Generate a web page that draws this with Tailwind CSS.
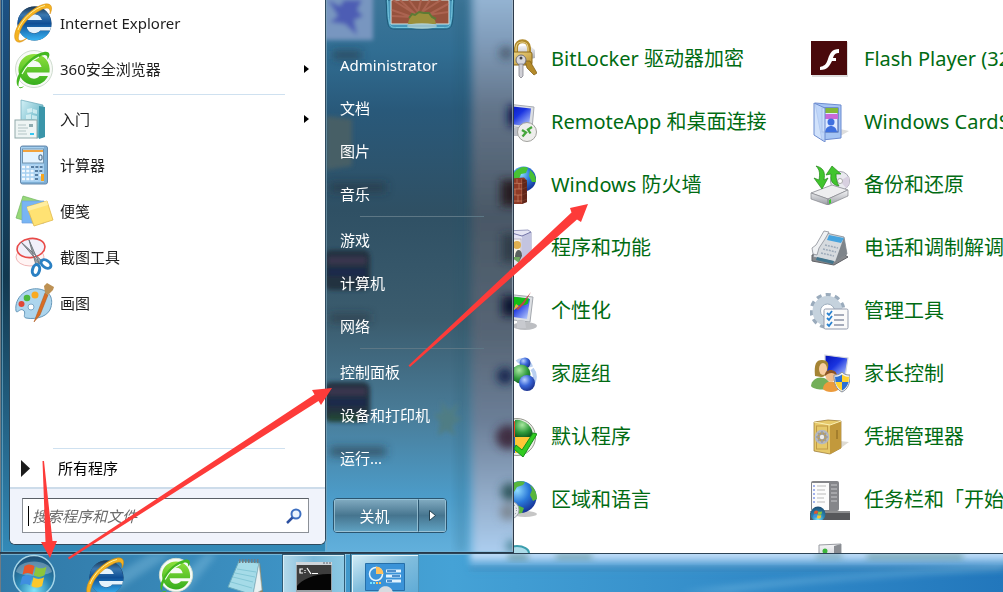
<!DOCTYPE html>
<html lang="zh-CN">
<head>
<meta charset="utf-8">
<title>开始菜单</title>
<script src="https://cdn.jsdelivr.net/npm/@tailwindcss/browser@4"></script>
</head>
<body class="h-screen overflow-hidden bg-white font-['Noto_Sans','Noto_Sans_CJK_SC',sans-serif]">
<svg class="absolute size-0" aria-hidden="true">
  <defs>
    <linearGradient id="ieb" x1="0" y1="0" x2="0" y2="1"><stop offset="0" stop-color="#1b3550"/><stop offset=".25" stop-color="#3a78b0"/><stop offset=".5" stop-color="#0f4f96"/><stop offset="1" stop-color="#38b4f4"/></linearGradient>
    <linearGradient id="grn" x1="0" y1="0" x2="0" y2="1"><stop offset="0" stop-color="#8fe03c"/><stop offset="1" stop-color="#35ae1d"/></linearGradient>
    <linearGradient id="gold" x1="0" y1="0" x2="1" y2="1"><stop offset="0" stop-color="#f0d98a"/><stop offset="1" stop-color="#b98f2e"/></linearGradient>
    <linearGradient id="scr" x1="0" y1="0" x2="1" y2="1"><stop offset="0" stop-color="#0412b8"/><stop offset=".45" stop-color="#1a34e0"/><stop offset="1" stop-color="#c9dcff"/></linearGradient>
    <linearGradient id="sil" x1="0" y1="0" x2="0" y2="1"><stop offset="0" stop-color="#f6f6f8"/><stop offset="1" stop-color="#9a9da4"/></linearGradient>
    <linearGradient id="aqua" x1="0" y1="0" x2="1" y2="1"><stop offset="0" stop-color="#d3f0f6"/><stop offset="1" stop-color="#3f9fb4"/></linearGradient>
    <radialGradient id="globe" cx=".4" cy=".3" r=".75"><stop offset="0" stop-color="#8fdcff"/><stop offset=".5" stop-color="#2a78d8"/><stop offset="1" stop-color="#142c90"/></radialGradient>
    <radialGradient id="bb" cx=".35" cy=".3" r=".75"><stop offset="0" stop-color="#b8d0ff"/><stop offset=".5" stop-color="#3a66d8"/><stop offset="1" stop-color="#1a308c"/></radialGradient>
    <radialGradient id="gb" cx=".4" cy=".3" r=".75"><stop offset="0" stop-color="#a8e8a0"/><stop offset=".6" stop-color="#2f9a3c"/><stop offset="1" stop-color="#106020"/></radialGradient>
    <radialGradient id="orb" cx=".5" cy=".85" r=".9"><stop offset="0" stop-color="#7fe4fa"/><stop offset=".45" stop-color="#2a86b4"/><stop offset="1" stop-color="#1c4468"/></radialGradient>
    <symbol id="ie" viewBox="0 0 40 40">
      <circle cx="20.500" cy="20.500" r="13" fill="none" stroke="#17385c" stroke-width="8"/>
      <path d="M20.500 3.500a17 17 0 0 0-17 17c0 9.500 7.500 17 17 17 7 0 13-4 15.700-10H26c-1.300 1.800-3.300 3-5.500 3-4 0-7-2.800-7.600-6.500h24.300c1.500-11-6.200-20.500-16.700-20.500zM13.200 17c1-3.500 3.800-5.600 7.300-5.600s6.200 2.100 7.200 5.600z" fill="url(#ieb)"/>
      <path d="M13.200 17c1-3.500 3.800-5.600 7.300-5.600s6.200 2.100 7.200 5.600zM13 24h24l-.8 3.500H26c-3 4-12 4-13-3.500z" fill="#e4f2fc"/>
      <path d="M7 26C2 37 4 41 13 35 6 42-1 40 1 30 4 17 20 3 31 1c7-1 8 4 5 10 1-7-3-7-9-4C18 11 10 19 7 26z" fill="#f4b321" stroke="#d3860c" stroke-width=".5"/>
      <path d="M4 27C8 16 20 5 31 2.500" stroke="#fff0a0" stroke-width="1" fill="none"/>
    </symbol>
    <symbol id="e360" viewBox="0 0 40 40">
      <circle cx="20" cy="20" r="18.500" fill="#f7faf6" stroke="#cfdccf"/>
      <path d="M20 5A15.500 15.500 0 1 0 34 27H25.500c-4 5-12 2.500-12.500-3.500h22.500C37 13 30 5 20 5zM13.500 18c2-8 12-8 14 0z" fill="url(#grn)"/>
      <path d="M8 25C1 39 6 42 10 37 3 41 1 34 4 27 9 14 22 4 30 3c6-1 7 3 3 8 2-6-3-6-8-3C17 12 11 18 8 25z" fill="#44b820"/>
      <path d="M8 25C12 17 17 12 25 8" stroke="#f4fff0" stroke-width="1.200" fill="none"/>
    </symbol>
    <symbol id="flag" viewBox="0 0 24 24">
      <path d="M4.500 4.500c2.500-1.700 5-1.500 7.500 0L10.500 11c-2.500-1.600-5-1.600-7.500 0z" fill="#e8562a"/>
      <path d="M13 5c2.500 1.600 5 1.600 8 0l-1.500 6.500c-3 1.600-5.500 1.500-8 0z" fill="#8cc63c"/>
      <path d="M2.700 12.500c2.500-1.700 5-1.500 7.500 0L8.700 19c-2.500-1.600-5-1.600-7.500 0z" fill="#3f8fe0"/>
      <path d="M11.200 13c2.500 1.600 5 1.600 8 0l-1.500 6.500c-3 1.600-5.500 1.500-8 0z" fill="#fbc82c"/>
    </symbol>
  </defs>
</svg>

<div class="relative flex h-full flex-col">
  <main class="relative min-h-0 flex-1 overflow-hidden bg-white">
    <nav aria-label="控制面板" class="grid grid-flow-col grid-cols-[312px_1fr] grid-rows-[repeat(9,63px)] pt-[27px] pl-[497px] text-[20px] leading-[28px] whitespace-nowrap text-[#006b12]">
      <a href="#" class="flex items-center gap-[14px]">
        <svg class="size-10 shrink-0" viewBox="0 0 40 40"><path d="M12 9l20-3 6 5v8l-18 4z" fill="url(#sil)"/><path d="M19 15V9c0-9 13-9 13 0v6" fill="none" stroke="#b08a2c" stroke-width="4"/><path d="M19 15V9c0-8 12-8 12 0v6" fill="none" stroke="#ecd58c" stroke-width="1.200"/><rect x="15" y="13" width="20" height="13" rx="2" fill="url(#gold)" stroke="#8c6a1c"/><path d="M28 22l5 0 7 12-3 2-4-4-3-3z" fill="#b48a2a" stroke="#7d5c14" stroke-width=".7"/><circle cx="24" cy="21" r="5" fill="#d8d8dc" stroke="#707078"/><circle cx="24" cy="19" r="1.500" fill="#444"/><path d="M22 25h4v12l-2 2-2-2z" fill="#d0d0d6" stroke="#77777f" stroke-width=".7"/></svg>
        BitLocker 驱动器加密</a>
      <a href="#" class="flex items-center gap-[14px]">
        <svg class="size-10 shrink-0" viewBox="0 0 40 40"><path d="M10 2l27 3-2 22-27-3z" fill="#dcdfe4" stroke="#a7abb2"/><path d="M11 4l23 2.500-2 18-22-3z" fill="url(#scr)"/><path d="M12 26h12l2 8H12z" fill="#bcbfc6"/><circle cx="30" cy="30" r="9.500" fill="#eeeeec" stroke="#a0a09c"/><path d="M25 28l4 2.500-3.500 4M35 25l-4 2.500 2.500 4" fill="none" stroke="#46a63c" stroke-width="2.300"/></svg>
        RemoteApp 和桌面连接</a>
      <a href="#" class="flex items-center gap-[14px]">
        <svg class="size-10 shrink-0" viewBox="0 0 40 40"><circle cx="26.500" cy="14" r="12.500" fill="url(#globe)"/><path d="M17 8c4-6 11-7 14-5l-2 5-5 1-2 5-6 0zM33 5c5 4 6 8 6 12l-4 0-3-6z" fill="#48c234"/><path d="M8 14l19-1.500 3 3V37l-5 2H8z" fill="#8f3a26"/><path d="M8 18l17 .5 5-2M8 24h17l5-2M8 30h17l5-2M8 36h17l5-2M20 14v4M14 18v6M22 18v6M18 24v6M13 30v6M21 30v7M25 14v24" stroke="#c98468" stroke-width=".7" fill="none"/><path d="M25 14l5 1.500V37l-5 2z" fill="#4c1b12" opacity=".65"/></svg>
        Windows 防火墙</a>
      <a href="#" class="flex items-center gap-[14px]">
        <svg class="size-10 shrink-0" viewBox="0 0 40 40"><path d="M8 3l23-1 3 2v28l-11 7-15-3z" fill="#e6e6f4" stroke="#9a9cc0"/><path d="M25 8l9-4v28l-9 6z" fill="#c3c4e0"/><path d="M8 3l17 5 9-4" fill="none" stroke="#7476a8"/><rect x="11" y="11" width="13" height="20" fill="#f8f4e8" stroke="#b8b4c8"/><circle cx="20" cy="17" r="4" fill="#e0b050"/><path d="M18 29c0-9 7-9 7-1l-3 6z" fill="#5a615f"/><path d="M14 29h9l-1 6z" fill="#6fa860"/></svg>
        程序和功能</a>
      <a href="#" class="flex items-center gap-[14px]">
        <svg class="size-10 shrink-0" viewBox="0 0 40 40"><ellipse cx="28" cy="35" rx="12" ry="4" fill="#bcbec2"/><path d="M8 3l28 3-3 25L8 28z" fill="#dcdfe3" stroke="#a4a8ae"/><path d="M10 5l23 3-3 20-20-3z" fill="url(#scr)"/><path d="M10 5l22 2.500-1 5c-5 4-9-1-14 4l-7-1z" fill="#13bd17"/><path d="M34 1l-9 11-6 6 2 1 6-6z" fill="#bd4545"/><path d="M22 15l-6 5 3-7z" fill="#e6b33c"/><path d="M20 29l8 1 1 7h-9z" fill="#c8cacf"/></svg>
        个性化</a>
      <a href="#" class="flex items-center gap-[14px]">
        <svg class="size-10 shrink-0" viewBox="0 0 40 40"><circle cx="12" cy="20" r="9" fill="url(#bb)"/><path d="M20 8c4-4 12-2 14 5M35 15c5 6 3 14-3 19" fill="none" stroke="#b9cff0" stroke-width="4"/><circle cx="28" cy="9" r="5.500" fill="url(#bb)"/><circle cx="24" cy="20" r="9.500" fill="url(#gb)"/><circle cx="30" cy="29" r="8" fill="url(#bb)"/></svg>
        家庭组</a>
      <a href="#" class="flex items-center gap-[14px]">
        <svg class="size-10 shrink-0" viewBox="0 0 40 40"><circle cx="20" cy="20" r="18.500" fill="#eeefe9" stroke="#96988e"/><path d="M18 4a16 16 0 0 0-14 16h14z" fill="#e54c28"/><path d="M18 3a16 16 0 0 1 18 17H18z" fill="url(#gb)"/><path d="M18 20h17a16 16 0 0 1-17 16z" fill="#ffc736"/><path d="M4 20h14v16C10 36 4 29 4 20z" fill="#245fb4"/><path d="M19 28l6 5 11-17 4 1-14 23-9-8z" fill="#31cb21" stroke="#159119"/></svg>
        默认程序</a>
      <a href="#" class="flex items-center gap-[14px]">
        <svg class="size-10 shrink-0" viewBox="0 0 40 40"><ellipse cx="28" cy="34" rx="12" ry="3" fill="#c6c6c6"/><circle cx="23.500" cy="17" r="16" fill="url(#globe)"/><path d="M10 8c5-6 13-8 18-6l-2 3-6 2-3 5-8-1zM33 5c5 3 7 9 7 14l-4 2-3-6 2-5zM20 25l7 3-2 5-6 1z" fill="#58b63c"/><circle cx="13" cy="30" r="9" fill="#e5e8ec" stroke="#9da4ac"/><circle cx="13" cy="30" r="6.500" fill="none" stroke="#727c88" stroke-dasharray="1 2.400"/></svg>
        区域和语言</a>
      <a href="#" aria-label="设备" class="flex items-center gap-[14px]">
        <svg class="size-10 shrink-0" viewBox="0 0 40 40"><ellipse cx="20" cy="10" rx="12" ry="7" fill="#aeddea" stroke="#3b9ead" stroke-width="2"/></svg>
      </a>
      <a href="#" class="flex items-center gap-[14px] pl-px">
        <svg class="size-10 shrink-0" viewBox="0 0 40 40"><rect x="2" y="3" width="36" height="35" fill="#dddddd"/><rect x="1" y="2" width="36" height="34" fill="#49090b"/><path d="M29 10c-7 0-9 4-11 10s-4 7-8 8v3c8 0 10-5 12-9h4v-3h-3c1-4 3-5 6-5z" fill="#fff"/></svg>
        Flash Player (32 位)</a>
      <a href="#" class="flex items-center gap-[14px] pl-px">
        <svg class="size-10 shrink-0" viewBox="0 0 40 40"><path d="M25 37l14-8-9-2z" fill="#dddddd"/><path d="M5 1l26 2v33l-19 2z" fill="#a5c4f3" stroke="#6d8cd0"/><rect x="12" y="6" width="16" height="24" fill="#dde9ff" stroke="#3958a5"/><path d="M15 6h13v5H15z" fill="#83b838"/><path d="M15 12h13v5H15z" fill="#c969d8"/><circle cx="21" cy="20" r="3.500" fill="#3e70df"/><path d="M15 30c1-8 11-8 12 0z" fill="#3e70df"/><path d="M4 1l11 5v34L4 33z" fill="#c6dbfa" fill-opacity=".8" stroke="#6d8cd0"/></svg>
        Windows CardSpace</a>
      <a href="#" class="flex items-center gap-[14px] pl-px">
        <svg class="size-10 shrink-0" viewBox="0 0 40 40"><circle cx="30" cy="16" r="9.500" fill="#e9e9ef" stroke="#a1a1ad"/><path d="M30 16l8-5a9 9 0 0 1-2 12z" fill="#d8d0e0"/><circle cx="30" cy="16" r="2.500" fill="#fff" stroke="#aaa"/><path d="M1 28L22 20l16 5-20 9z" fill="#eeeef0" stroke="#9fa0a6"/><path d="M1 28l17 6v6L1 34zM18 34l20-9v6l-20 9z" fill="url(#sil)" stroke="#85868d" stroke-width=".7"/><path d="M19 35l2-1v4l-2 1z" fill="#35c928"/><path d="M6 1c9 2 9 8 8 14l4-2-6 11L4 13l5 2c1-6 1-10-3-14z" fill="#41c52d" stroke="#25861b" stroke-width=".7"/><path d="M22 1L31 9l-5 0c0 5 1 9 3 12-7-1-9-6-8-12l-5 1z" fill="#41c52d" stroke="#25861b" stroke-width=".7"/></svg>
        备份和还原</a>
      <a href="#" class="flex items-center gap-[14px] pl-px">
        <svg class="size-10 shrink-0" viewBox="0 0 40 40"><path d="M2 27l22-7 14 9-14 8-22-4z" fill="#86888c" stroke="#606267"/><path d="M16 5l18 4 3 17-12 8L3 29l5-14z" fill="#d6dade" stroke="#74797f" stroke-width=".7"/><path d="M34 9l3 17-12 8z" fill="#7e848a"/><path d="M19 7l15 3-3 5-14-3z" fill="#47a4de"/><path d="M15 17l13 3M13 21l13 3M11 25l13 3" stroke="#9ca9b8" stroke-width="1.500" stroke-dasharray="2 1"/><path d="M14 3l5 1-4 7-6 9-2 7-4-1-1-6 4-3 4-7z" fill="#f0f2f4" stroke="#8a8e95" stroke-width=".8"/><path d="M7 29l17 4-1 3-17-4z" fill="#42768e"/></svg>
        电话和调制解调器</a>
      <a href="#" class="flex items-center gap-[14px] pl-px">
        <svg class="size-10 shrink-0" viewBox="0 0 40 40"><circle cx="17.500" cy="20" r="16" fill="none" stroke="#9aabbc" stroke-width="4" stroke-dasharray="5 4.140"/><circle cx="17.500" cy="20" r="11" fill="none" stroke="#c5d2dd" stroke-width="8"/><circle cx="17.500" cy="20" r="7" fill="#fff" stroke="#9bacbc"/><rect x="14" y="18" width="24" height="20" rx="1.500" fill="#fafafa" stroke="#929bad"/><path d="M17 22l2 2 3-4M17 27l2 2 3-4M17 33l2 2 3-4" fill="none" stroke="#2880cf" stroke-width="1.800"/><path d="M24 24h10M24 29h10M24 34h10" stroke="#8b93a6" stroke-width="1.300"/></svg>
        管理工具</a>
      <a href="#" class="flex items-center gap-[14px] pl-px">
        <svg class="size-10 shrink-0" viewBox="0 0 40 40"><path d="M15 1l23 3-3 19-20-4z" fill="url(#scr)" stroke="#d3d6dc" stroke-width="1.200"/><path d="M1 32c1-11 18-12 20 1-4 4-18 3-20-1z" fill="#73af58"/><path d="M5 22C4 10 6 6 12 6s7 4 6 8-3 10-7 9z" fill="#a58434"/><ellipse cx="13" cy="15" rx="4" ry="6" fill="#f8cda0"/><path d="M13 35c0-10 16-10 16 0-3 4-13 4-16 0z" fill="#ec9b3c"/><circle cx="21" cy="22" r="5.500" fill="#f2bd8a"/><path d="M15 22c-1-8 12-8 12 0-3-4-8-4-12 0z" fill="#8b5424"/><path d="M32 18c3 3 5 3 8 3 0 9-2 14-8 17-6-3-8-8-8-17 3 0 5 0 8-3z" fill="#f2f2f2" stroke="#8b929b"/><path d="M32 20.500V28h-6.500l-.5-5.200c3 0 5-.8 7-2.300zM32 28h6.500c-1 4-3 6.500-6.500 8.500z" fill="#2a6fd4"/><path d="M32 20.500V28h6.500l.5-5.200c-3 0-5-.8-7-2.300zM32 28h-6.500c1 4 3 6.500 6.500 8.500z" fill="#ffd22e"/></svg>
        家长控制</a>
      <a href="#" class="flex items-center gap-[14px] pl-px">
        <svg class="size-10 shrink-0" viewBox="0 0 40 40"><path d="M28 33l11-8-9-1z" fill="#dedbd2"/><path d="M4 5L18 3l13 1v27l-11 6-16-3z" fill="#e6c96a" stroke="#94702a" stroke-width=".7"/><path d="M20 8l11-4v27l-11 6z" fill="#c2993c"/><path d="M4 5l16 3 11-4" fill="none" stroke="#fbf0b6"/><rect x="6.500" y="9" width="11" height="23" fill="none" stroke="#c19a46"/><circle cx="12" cy="20" r="6" fill="#c3a14e" stroke="#b4b8c0" stroke-width="2.500"/><path d="M6 20h12M12 14v12M8 16l8 8M16 16l-8 8" stroke="#999ca6" stroke-width="1.500"/><circle cx="12" cy="20" r="2.200" fill="#eee"/><path d="M27 13v9" stroke="#86641f"/></svg>
        凭据管理器</a>
      <a href="#" class="flex items-center gap-[14px] pl-px">
        <svg class="size-10 shrink-0" viewBox="0 0 40 40"><rect x="1" y="1" width="28" height="30" rx="2" fill="#85868a"/><rect x="2" y="3" width="17" height="27" fill="#fcfcfc"/><path d="M3 6h2M3 10h2M3 14h2M3 18h2M3 22h2" stroke="#4666dc" stroke-width="1.200"/><path d="M7 6h9M7 10h8M7 14h9M7 18h7M7 22h8" stroke="#bababa" stroke-width="1"/><path d="M21 5h6M21 9h6M21 13h6M21 17h6M21 21h6" stroke="#c7c7ca"/><path d="M0 31h40v9H0z" fill="#57585b"/><path d="M0 31h40v2H0z" fill="#8d8e90"/><circle cx="8" cy="34" r="7.500" fill="url(#orb)"/><use href="#flag" x="2.500" y="29" width="11" height="11"/></svg>
        任务栏和「开始」菜单</a>
      <a href="#" aria-label="设备管理器" class="flex items-center gap-[14px] pl-px">
        <svg class="size-10 shrink-0" viewBox="0 0 40 40"><path d="M9 2l22-1v35H9z" fill="url(#sil)" stroke="#989ba1"/><path d="M24 3l7-2v34h-7z" fill="#8a8d92"/><circle cx="15" cy="8" r="2.500" fill="#3bb53a"/></svg>
      </a>
    </nav>

    <!-- Start menu -->
    <section aria-label="开始菜单" class="absolute inset-y-0 left-0 flex w-[514px] border-b border-[#26384a] bg-linear-to-b from-[#1c5184] via-[#12384f] to-[#338ab8]">
      <svg class="absolute inset-0 size-full" viewBox="0 0 514 552" preserveAspectRatio="none" aria-hidden="true">
        <defs>
          <linearGradient id="gl" x1="0" y1="0" x2="0" y2="1"><stop offset="0" stop-color="#3d7699"/><stop offset=".09" stop-color="#316e93"/><stop offset=".2" stop-color="#29597a"/><stop offset=".38" stop-color="#2f5064"/><stop offset=".58" stop-color="#3b5c6e"/><stop offset=".75" stop-color="#497c98"/><stop offset=".9" stop-color="#4c9cc9"/><stop offset="1" stop-color="#62b0dc"/></linearGradient>
          <linearGradient id="gr" x1="0" y1="0" x2="0" y2="1"><stop offset="0" stop-color="#9dbedd"/><stop offset=".1" stop-color="#819dbb"/><stop offset=".22" stop-color="#627489"/><stop offset=".4" stop-color="#4a5866"/><stop offset=".6" stop-color="#566575"/><stop offset=".75" stop-color="#6c7f98"/><stop offset=".88" stop-color="#94aecb"/><stop offset="1" stop-color="#b4d8fb"/></linearGradient>
          <filter id="b4" x="-50%" y="-50%" width="200%" height="200%"><feGaussianBlur stdDeviation="4"/></filter>
          <filter id="b2" x="-50%" y="-50%" width="200%" height="200%"><feGaussianBlur stdDeviation="2"/></filter>
          <clipPath id="gc"><path d="M325 0h189v552H325z"/></clipPath>
        </defs>
        <g clip-path="url(#gc)">
          <path d="M325 0h189v552H325z" fill="url(#gl)"/>
          <path d="M472 -20h70v590h-70z" fill="url(#gr)" filter="url(#b4)"/>
          <path d="M456 0h10v552h-10z" fill="#28566a" opacity=".18" filter="url(#b4)"/>
          <g filter="url(#b2)">
            <path d="M316 -9h57v49h-57z" fill="#7896c0"/>
            <path d="M328 0l12 6 4-6h18l-5 10 6 6-9 4 3 15-12-11-15-2 8-6z" fill="#4d5db4"/>
            <path d="M326 116l26 3v47l-26 4z" fill="#465f66"/>
            <rect x="324" y="250" width="46" height="40" rx="7" fill="#24303f"/><path d="M328 257h38v7h-38z" fill="#3a3450"/><path d="M328 268h38v8h-38z" fill="#1e2a4c"/>
            <rect x="324" y="382" width="46" height="40" rx="7" fill="#24303f"/><path d="M328 388h38v7h-38z" fill="#3a3450"/><path d="M328 398h38v8h-38z" fill="#1e2a4c"/><path d="M328 414h30v7h-30z" fill="#234434"/>
            <path d="M441 401l8 10 10-9-5 14 8 2-10 8 4 10-10-6-8 6 2-14-6-8 8-1z" fill="#507d84"/>
          </g>
          <g filter="url(#b4)" fill="#24303c">
            <path d="M333 51h28v8h-28zM330 183h56v9h-56zM330 314h40v8h-40zM330 447h56v9h-56z" opacity=".6"/>
            <circle cx="506" cy="53" r="7" opacity=".5"/><path d="M508 106h14v20h-14z" fill="#0d154c"/><path d="M501 180h20v26h-20z" fill="#271c22"/><path d="M502 234h16v28h-16z" opacity=".7"/><path d="M502 296h20v20h-20z" fill="#0c1232"/><circle cx="505" cy="376" r="8" fill="#15284f"/><circle cx="508" cy="437" r="12" fill="#402e43"/><circle cx="510" cy="492" r="9" fill="#30585e"/><circle cx="508" cy="512" r="8" fill="#7d8793"/><circle cx="512" cy="546" r="6" fill="#4a8597"/>
          </g>
        </g>
        <path d="M0.500 0v552" stroke="#707b84"/><path d="M2.500 0v551" stroke="#7bb8d4" stroke-opacity=".6" fill="none"/><path d="M2 551.500h511" stroke="#7bb8d4" stroke-opacity=".5"/>
        <path d="M512.500 0v551" stroke="#a9bccb" stroke-opacity=".7"/><path d="M513.500 0v552" stroke="#2d3b4b"/>
        <path d="M326.500 0v550" stroke="#86a8ba" stroke-opacity=".6"/>
      </svg>

      <div class="relative mb-[7px] ml-[9px] flex w-[317px] flex-col overflow-hidden rounded-b-md border border-t-0 border-[#2e4a5e] bg-white text-[15px] leading-5 text-[#1e1e1e]">
        <ul class="flex flex-col [&>li]:h-[46px] [&_button]:flex [&_button]:h-full [&_button]:w-full [&_button]:items-center [&_button]:gap-[6px] [&_button]:pr-4 [&_button]:pl-1 [&_svg.i]:size-10 [&_svg.i]:shrink-0 [&_span]:flex-1 [&_span]:text-left">
          <li><button><svg class="i"><use href="#ie"/></svg><span>Internet Explorer</span></button></li>
          <li><button><svg class="i"><use href="#e360"/></svg><span>360安全浏览器</span><svg class="h-2 w-[5px]" viewBox="0 0 5 8"><path d="M0 0l5 4-5 4z" fill="#000"/></svg></button></li>
          <li class="mt-[2px] mr-10 mb-px ml-[43px] !h-px bg-[#cfe1f0]"></li>
          <li><button><svg class="i" viewBox="0 0 40 40"><path d="M7 1l22 5v32l-6 1-16-5z" fill="url(#aqua)" stroke="#67a6b8" stroke-width=".7"/><path d="M25 7l6 1v30l-6 2z" fill="#3b95a9"/><path d="M13 10l5-1 .5 4-5 1zM19 10l4 1v4l-4-1zM12 16l5-1v5l-5 0zM18 16l5 1v4l-5-1z" fill="#f4ffff" opacity=".6"/><rect x="1" y="21" width="22" height="18" fill="#eef5f4" stroke="#91a9aa"/><path d="M4 26h8M4 29h10M4 32h8M4 35h9" stroke="#b2c4c5"/><path d="M15 25h4v3h-4z" fill="#8fabaf"/><path d="M16 34h4v2h-4z" fill="#36c6f0"/></svg><span>入门</span><svg class="h-2 w-[5px]" viewBox="0 0 5 8"><path d="M0 0l5 4-5 4z" fill="#000"/></svg></button></li>
          <li><button><svg class="i" viewBox="0 0 40 40"><rect x="6.500" y="1" width="27" height="38" rx="2" fill="#7eafd5" stroke="#6689ac"/><rect x="7" y="2" width="23" height="35" fill="#a5cff0"/><rect x="8.500" y="4" width="21" height="14" fill="#e3f3ff" stroke="#7193ae"/><path d="M9 5h20v2H9z" fill="#f2a33c"/><rect x="25" y="10" width="3" height="5" rx="1" fill="none" stroke="#31567a"/><path d="M8 22h21M8 26h21M8 30h21M8 34h17" stroke="#f3f8fd" stroke-width="2.500" stroke-dasharray="3 1.300"/><path d="M17 22h12M21 26h8M21 30h4M21 34h4" stroke="#567da2" stroke-width="2" stroke-dasharray="3 1.300"/><path d="M27 29h3v7h-3z" fill="#f5a51f"/></svg><span>计算器</span></button></li>
          <li><button><svg class="i" viewBox="0 0 40 40"><path d="M9 5l20 6-7 22-20-6z" fill="#98d879" stroke="#70b660" stroke-width=".7"/><path d="M8 10h22v22H8z" fill="#78b5f3" stroke="#6d9fdf" stroke-width=".7"/><path d="M13 16l20-6 6 19-19 6z" fill="#ffe273" stroke="#e1b74b" stroke-width=".8"/><path d="M13 16l20-6 1 4-20 6z" fill="#ffed9f"/></svg><span>便笺</span></button></li>
          <li><button><svg class="i" viewBox="0 0 40 40"><ellipse cx="16" cy="20" rx="14" ry="9" fill="#fff4f4" stroke="#f0b6b6"/><ellipse cx="17" cy="11" rx="14" ry="9.500" fill="#f1f0fa" stroke="#e84a48" stroke-width="1.600" transform="rotate(-8 17 11)"/><path d="M7 5l21 19-2 3zM15 3l7 25 3-2z" fill="#a0a5ab" stroke="#747a80" stroke-width="1"/><ellipse cx="32" cy="27" rx="5.500" ry="3.500" transform="rotate(35 32 27)" fill="none" stroke="#2a80c3" stroke-width="3"/><ellipse cx="22" cy="33" rx="3.500" ry="5.500" transform="rotate(15 22 33)" fill="none" stroke="#2a80c3" stroke-width="3"/></svg><span>截图工具</span></button></li>
          <li><button><svg class="i" viewBox="0 0 40 40"><path d="M2 28C0 14 13 4 25 6c12 2 14 10 12 18-2 9-14 13-25 11-4-1 1-6-3-8-3-2-6 4-7 1z" fill="#add5ed" stroke="#6698ba"/><circle cx="7.500" cy="21" r="3" fill="#e04736"/><circle cx="13" cy="15" r="3.300" fill="#4cb93d"/><circle cx="21" cy="12" r="3.500" fill="#f8aa21"/><circle cx="17" cy="24" r="3" fill="#fff" stroke="#7fa9c8"/><path d="M31 10l3 2-8 20-6 7z" fill="#d96d24" stroke="#a7551b" stroke-width=".5"/><path d="M31 10l-1-7 3-3 7 4-1 3-5 5z" fill="#bd9154"/></svg><span>画图</span></button></li>
        </ul>
        <div class="mt-auto mr-10 ml-[43px] h-px bg-[#cfe1f0]"></div>
        <button class="flex h-[38px] items-center gap-7 pl-[11px] text-black"><svg class="h-[17px] w-[9px]" viewBox="0 0 9 17"><path d="M0 0l9 8.500L0 17z" fill="#1c1c1c"/></svg>所有程序</button>
        <form class="border-t-2 border-[#cddcea] bg-[#f0f3fb] pt-[9px] pr-4 pb-[11px] pl-3">
          <label class="flex h-[35px] items-center border border-[#8b9097] border-t-[#5a5f66] bg-white pr-1.5 pl-[5px]">
            <span class="h-5 w-px bg-black"></span>
            <input aria-label="搜索" placeholder="搜索程序和文件" class="min-w-0 flex-1 pl-[3px] text-[15px] italic outline-none placeholder:text-[#6b6b6b]">
            <svg class="size-4" viewBox="0 0 16 16"><circle cx="10" cy="6" r="4.500" fill="#eaf4fd" stroke="#3d6fc0" stroke-width="2"/><path d="M6.500 9.500L1 15" stroke="#2c50a0" stroke-width="2.500"/></svg>
          </label>
        </form>
      </div>

      <div class="relative flex flex-1 flex-col pr-[30px] pl-[7px] text-[15px] leading-5 text-white">
        <svg class="ml-[52px] h-[31px] w-[70px] shrink-0" viewBox="0 0 70 31" role="img" aria-label="用户图片"><path d="M1 0c1 8 0 16 2 24 1 4 3 5 7 5h50c4 0 6-1 7-5 2-8 1-16 2-24z" fill="#4fa5c8" fill-opacity=".7" stroke="#1c5a78"/><path d="M2.500 0c1 8 0 16 2 23 1 4 3 4.500 6 4.500h49c3 0 5-.5 6-4.500 2-7 1-15 2-23" fill="none" stroke="#75c5dd" stroke-width="1"/><path d="M6 0h58v24H6z" fill="#96523d" stroke="#d0e8e8"/><path d="M8 0l22 14L15 0M24 0l9 12L36 0M45 0l-8 12L56 0M63 4L43 15l20-3M7 10l20 7-20-1" fill="none" stroke="#ab6350" stroke-width="2"/><path d="M23 24c1-16 26-16 28 0z" fill="#9a8f3b"/><path d="M24 18l3-4 3 1 4-3 5 1 5 0 3 4 4 2" fill="none" stroke="#5d7a35" stroke-width="2"/><ellipse cx="37" cy="26" rx="15" ry="3" fill="#b7d2d2" opacity=".7"/></svg>
        <ul class="mt-3 flex flex-col [&_button]:h-[43px] [&_button]:w-full [&_button]:pl-[7px] [&_button]:text-left [&>li.s]:my-px [&>li.s]:ml-[27px] [&>li.s]:h-px [&>li.s]:bg-[#5d7785]">
          <li><button>Administrator</button></li>
          <li><button>文档</button></li>
          <li><button>图片</button></li>
          <li><button>音乐</button></li>
          <li class="s"></li>
          <li><button>游戏</button></li>
          <li><button>计算机</button></li>
          <li><button>网络</button></li>
          <li class="s"></li>
          <li><button>控制面板</button></li>
          <li><button>设备和打印机</button></li>
          <li><button>运行...</button></li>
        </ul>
        <div class="mt-auto mb-[19px] flex h-[35px] w-[114px] overflow-hidden rounded-sm border border-[#2a5570]">
          <button class="flex-1 border border-[#a8cfe0]/70 bg-linear-to-b from-[#7fa9bf] from-0% via-[#46758f] via-50% to-[#5fa0c0] pr-[3px]">关机</button>
          <button aria-label="更多" class="flex w-[28px] items-center justify-center border border-[#a8cfe0]/70 border-l-[#2a5570] bg-linear-to-b from-[#7fa9bf] via-[#46758f] to-[#5fa0c0]"><svg class="h-[11px] w-[7px]" viewBox="0 0 7 11"><path d="M.5.500L6.500 5.500l-6 5z" fill="#fff" stroke="#23404f"/></svg></button>
        </div>
      </div>
    </section>
  </main>

  <footer class="relative flex h-[39px] shrink-0 items-start overflow-hidden border-t border-[#2d4456] bg-linear-to-r from-[#3078a6] via-[#45a2d6] via-45% to-[#2277bc]">
    <svg class="absolute inset-0 size-full" viewBox="0 0 1003 38" preserveAspectRatio="none" aria-hidden="true">
      <defs><linearGradient id="tw" x1="0" y1="0" x2="0" y2="38" gradientUnits="userSpaceOnUse"><stop offset="0" stop-color="#c4e0fa"/><stop offset=".14" stop-color="#9fcaee"/><stop offset=".34" stop-color="#5ea4d6" stop-opacity=".4"/><stop offset=".5" stop-color="#286f9d" stop-opacity="0"/></linearGradient><filter id="tb" x="-5%" y="-50%" width="110%" height="200%"><feGaussianBlur stdDeviation="3"/></filter></defs>
      <path d="M470 -20h560v58H470z" fill="url(#tw)" filter="url(#tb)"/>
      <path d="M470 13h540v3H470z" fill="#286f9d" opacity=".4" filter="url(#tb)"/>
      <g fill="#2d6a5e" opacity=".5" filter="url(#tb)"><path d="M556 0h36v5h-36zM867 0h96v5h-96zM816 0h26v4h-26zM508 0h20v6h-20z"/></g>
      <g fill="#a4d9f2" opacity=".28" filter="url(#tb)"><path d="M85 38L150 0h22l-58 38zM165 38L205 0h12l-30 38zM680 38C780 24 880 18 1003 10v6C880 24 800 28 730 38z"/></g>
      <path d="M0 .5h470" stroke="#8ec7e2" opacity=".7"/><path d="M.5 0v38" stroke="#707b84"/>
    </svg>
    <button aria-label="开始" class="relative ml-[12px] w-11"><svg class="size-11" viewBox="0 0 44 44"><circle cx="22" cy="22" r="20.500" fill="url(#orb)" stroke="#a6d6e8" stroke-width="1.500"/><path d="M4 18C6 4 38 4 40 18c-10 5-26 5-36 0z" fill="#fff" opacity=".28"/><use href="#flag" x="6" y="6" width="33" height="32"/></svg></button>
    <button aria-label="Internet Explorer" class="relative ml-[30px] w-10"><svg class="mt-[3px] size-10"><use href="#ie"/></svg></button>
    <button aria-label="360安全浏览器" class="relative ml-8 w-9"><svg class="mt-[3px] size-9"><use href="#e360"/></svg></button>
    <button aria-label="记事本" class="relative ml-8 w-[38px]"><svg class="mt-1 size-[38px]" viewBox="0 0 38 38"><path d="M34 5l3 31-10 2z" fill="#95855c"/><path d="M13 3l20 2-6 32-25-8z" fill="#a5dbe8" stroke="#6aaabc"/><path d="M33 5l3 27-9 5z" fill="#e9f1f2" stroke="#89abb5" stroke-width=".6"/><path d="M11 11l19 3M9 15l20 4M7 19l20 5M5 24l21 6" stroke="#84c7d6"/><path d="M13 3h21" stroke="#717c83" stroke-width="4" stroke-dasharray="1.500 1.500"/></svg></button>
    <button aria-label="命令提示符" class="relative ml-[18px] flex h-[39px] w-[63px] justify-center border border-b-0 border-[#2f5b75] bg-linear-to-r from-[#b4d9ea] via-[#79b8d8] to-[#8dc9e4] pt-[7px] shadow-[inset_1px_1px_0_#d8eef7]"><svg class="h-8 w-9" viewBox="0 0 36 32"><path d="M0 0h36v30H0z" fill="#99a0a5"/><path d="M0 0h36v3H0z" fill="#cfd5da"/><path d="M27 1h2M30 1h2M33 1h2" stroke="#5b6470"/><path d="M1 3h34v25H1z" fill="#050505"/><path d="M1 3h34v9C20 11 6 17 1 24z" fill="#3d3d3d"/><path d="M7 7H4v4h3M9 8v1M9 10v1M11 6l4 6M16 11.500h6" stroke="#fff" fill="none" stroke-width="1.200"/></svg></button>
    <span class="relative h-[39px] w-[6px] border-x border-[#c4e5f3]/60 border-r-[#2f5b75]"></span>
    <button aria-label="控制面板" class="relative flex h-[39px] w-[68px] justify-center border border-b-0 border-[#4f94b8] bg-linear-to-br from-[#d2ecf6] via-[#80bddd] to-[#5fabd6] pt-[8px] shadow-[inset_1px_1px_0_#e6f6fb]"><svg class="h-[30px] w-10" viewBox="0 0 40 30"><path d="M.5.500h39v27H.5z" fill="#3b93d8" stroke="#266fa9"/><circle cx="11" cy="11" r="6.500" fill="none" stroke="#e6f5ff" stroke-width="1.500"/><path d="M11 11V3.500a7.500 7.500 0 0 1 7.500 7.500z" fill="#ffc05c"/><path d="M21 8h15M21 13h15M21 18h15" stroke="#e2f4ff" stroke-width="3"/><path d="M22 8h9M27 13h8M22 18h5" stroke="#216dbb" stroke-width="1.500"/><path d="M5 20h6" stroke="#78e2ff" stroke-width="2" stroke-dasharray="2 1"/><path d="M11 20h5" stroke="#ffc05c" stroke-width="2" stroke-dasharray="2 1"/><path d="M13 30c1-9 14-9 15 0z" fill="#d7dbe0"/></svg></button>
  </footer>

  <!-- Step arrows -->
  <svg class="pointer-events-none absolute top-0 left-0 h-[592px] w-[1003px]" viewBox="0 0 1003 592" fill="#fd3b39" aria-hidden="true">
    <path d="M42.500 461h1.500L52.500 541H57l-7 17-9-16h4.500z"/>
    <path d="M68 557.500L314.500 394.500 312 390l20-2-11 17-2.500-4L69 559.500z"/>
    <path d="M408.500 365.500L571.500 212.500 570 208l18-4-7 18-4-2.500L410 367z"/>
  </svg>
</div>
</body>
</html>
